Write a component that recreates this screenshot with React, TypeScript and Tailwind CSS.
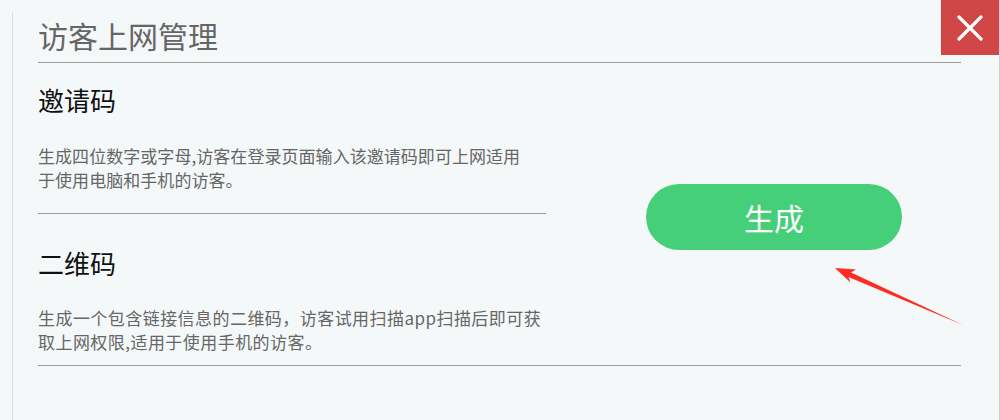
export default function App() {
    return (
        <div className="relative w-[1000px] h-[420px] overflow-hidden bg-[#f5f8f9] border-r border-[#c9cfd4] pt-3 pl-3 font-['Noto_Sans_CJK_SC',sans-serif]">
            <div className="h-full border-l border-[#d9dee3] pl-[25px] pr-[38px]">
                <div className="h-[51px] border-b border-[#9a9a9a] pt-[3px] text-[30px] leading-[40px] text-[#666]">
                    访客上网管理
                </div>

                <div className="flex border-b border-[#9a9a9a]">
                    <div className="w-[508px]">
                        <div className="pt-[19px] pb-[21px] border-b border-[#9a9a9a]">
                            <h3 className="text-[26px] leading-[36px] text-[#111]">邀请码</h3>
                            <p className="mt-[26px] text-[17px] leading-[24px] tracking-[0.05px] text-[#666] whitespace-nowrap">
                                生成四位数字或字母,访客在登录页面输入该邀请码即可上网适用
                                <br />
                                于使用电脑和手机的访客。
                            </p>
                        </div>
                        <div className="pt-[31px] pb-[11px]">
                            <h3 className="text-[26px] leading-[36px] text-[#111]">二维码</h3>
                            <p className="mt-[25px] text-[17px] leading-[24px] tracking-[0.45px] text-[#666] whitespace-nowrap">
                                生成一个包含链接信息的二维码，访客试用扫描app扫描后即可获
                                <br />
                                取上网权限,适用于使用手机的访客。
                            </p>
                        </div>
                    </div>
                    <div className="ml-[100px] mt-[121px]">
                        <button className="w-[256px] h-[66px] rounded-full bg-[#45cf79] text-white text-[30px] leading-none">
                            生成
                        </button>
                    </div>
                </div>
            </div>

            {/* close */}
            <button className="absolute top-0 right-0 w-[58px] h-[55px] bg-[#d04545] flex items-center justify-center">
                <svg width="26" height="26" viewBox="0 0 26 26">
                    <path d="M2 2 L24 24 M24 2 L2 24" stroke="#fff" strokeWidth="3.2" strokeLinecap="round" />
                </svg>
            </button>

            {/* annotation arrow */}
            <svg className="absolute left-[830px] top-[260px] pointer-events-none" width="140" height="72" viewBox="830 260 140 72">
                <polygon
                    points="835,268 856,269.5 851,272.5 963,325 848.5,277 850.5,282.5"
                    fill="#ff2a20"
                />
            </svg>
        </div>
    );
}
